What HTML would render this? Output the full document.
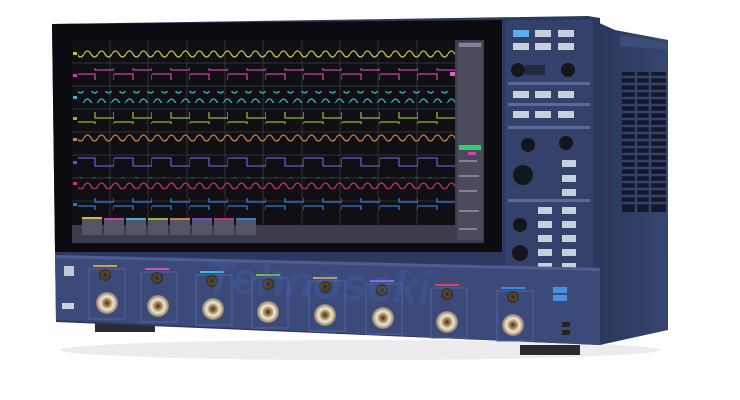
<!DOCTYPE html>
<html><head><meta charset="utf-8"><style>
html,body{margin:0;padding:0;background:#fff;}
svg{display:block;}
</style></head><body>
<svg width="740" height="400" viewBox="0 0 740 400" xmlns="http://www.w3.org/2000/svg" font-family="Liberation Sans, sans-serif">
<defs>
<linearGradient id="side" x1="0" x2="1"><stop offset="0" stop-color="#2a3658"/><stop offset="1" stop-color="#364570"/></linearGradient>
<radialGradient id="bnc"><stop offset="0" stop-color="#3a3020"/><stop offset="0.35" stop-color="#b09060"/><stop offset="0.6" stop-color="#f0e8d8"/><stop offset="1" stop-color="#8a7a60"/></radialGradient>
<radialGradient id="sm"><stop offset="0" stop-color="#202020"/><stop offset="0.5" stop-color="#5a4a30"/><stop offset="1" stop-color="#2a2a2a"/></radialGradient>
<pattern id="sy" width="14" height="12" patternUnits="userSpaceOnUse"><path d="M0 6 Q3.5 0 7 6 T14 6" fill="none" stroke="#c8c040" stroke-width="1.3"/></pattern>
<pattern id="sc" width="14" height="12" patternUnits="userSpaceOnUse"><path d="M0 6 Q3.5 0 7 6 T14 6" fill="none" stroke="#30b8c8" stroke-width="1.3"/></pattern>
<pattern id="so" width="14" height="12" patternUnits="userSpaceOnUse"><path d="M0 6 Q3.5 0 7 6 T14 6" fill="none" stroke="#c88040" stroke-width="1.3"/></pattern>
<pattern id="sp" width="14" height="12" patternUnits="userSpaceOnUse"><path d="M0 6 Q3.5 0 7 6 T14 6" fill="none" stroke="#c83070" stroke-width="1.3"/></pattern>
<pattern id="qm" width="38" height="12" patternUnits="userSpaceOnUse"><path d="M0 2 H19 V10 H38 V2" fill="none" stroke="#c840a8" stroke-width="1.3"/></pattern>
<pattern id="qg" width="38" height="12" patternUnits="userSpaceOnUse"><path d="M0 2 H19 V10 H38 V2" fill="none" stroke="#90b830" stroke-width="1.3"/></pattern>
<pattern id="qv" width="38" height="12" patternUnits="userSpaceOnUse"><path d="M0 2 H19 V10 H38 V2" fill="none" stroke="#7050c8" stroke-width="1.3"/></pattern>
<pattern id="qb" width="38" height="12" patternUnits="userSpaceOnUse"><path d="M0 2 H19 V10 H38 V2" fill="none" stroke="#3078d0" stroke-width="1.3"/></pattern>
</defs>
<ellipse cx="360" cy="350" rx="300" ry="10" fill="#ececee"/>
<rect x="95" y="322" width="60" height="10" fill="#2a2a30"/>
<rect x="520" y="345" width="60" height="10" fill="#2a2a30"/>
<path d="M588 18 L615 30 L668 40 L668 330 L600 345 Z" fill="url(#side)"/>
<path d="M620 35 L668 42 L668 50 L620 46 Z" fill="#3d4c78"/>
<rect x="622" y="72" width="44" height="140" fill="#14182a"/>
<g stroke="#34426a" stroke-width="2.5">
<line x1="622" y1="77" x2="666" y2="77"/><line x1="622" y1="84" x2="666" y2="84"/><line x1="622" y1="91" x2="666" y2="91"/><line x1="622" y1="98" x2="666" y2="98"/><line x1="622" y1="105" x2="666" y2="105"/><line x1="622" y1="112" x2="666" y2="112"/><line x1="622" y1="119" x2="666" y2="119"/><line x1="622" y1="126" x2="666" y2="126"/><line x1="622" y1="133" x2="666" y2="133"/><line x1="622" y1="140" x2="666" y2="140"/><line x1="622" y1="147" x2="666" y2="147"/><line x1="622" y1="154" x2="666" y2="154"/><line x1="622" y1="161" x2="666" y2="161"/><line x1="622" y1="168" x2="666" y2="168"/><line x1="622" y1="175" x2="666" y2="175"/><line x1="622" y1="182" x2="666" y2="182"/><line x1="622" y1="189" x2="666" y2="189"/><line x1="622" y1="196" x2="666" y2="196"/><line x1="622" y1="203" x2="666" y2="203"/>
<line x1="636" y1="72" x2="636" y2="212"/><line x1="650" y1="72" x2="650" y2="212"/>
</g>
<path d="M52 24 L588 16 L600 18 L600 345 L56 322 Z" fill="#2c3860"/>
<rect x="505" y="20" width="88" height="258" fill="#34416a"/>
<g fill="#c8d0dc">
<rect x="513" y="30" width="16" height="7" fill="#5ab0e8"/><rect x="535" y="30" width="16" height="7"/><rect x="558" y="30" width="16" height="7"/>
<rect x="513" y="43" width="16" height="7"/><rect x="535" y="43" width="16" height="7"/><rect x="558" y="43" width="16" height="7"/>
<rect x="513" y="91" width="16" height="7"/><rect x="535" y="91" width="16" height="7"/><rect x="558" y="91" width="16" height="7"/>
<rect x="513" y="111" width="16" height="7"/><rect x="535" y="111" width="16" height="7"/><rect x="558" y="111" width="16" height="7"/>
<rect x="562" y="160" width="14" height="7"/><rect x="562" y="175" width="14" height="7"/><rect x="562" y="189" width="14" height="7"/>
<rect x="538" y="207" width="14" height="7"/><rect x="562" y="207" width="14" height="7"/>
<rect x="538" y="221" width="14" height="7"/><rect x="562" y="221" width="14" height="7"/>
<rect x="538" y="235" width="14" height="7"/><rect x="562" y="235" width="14" height="7"/>
<rect x="538" y="249" width="14" height="7"/><rect x="562" y="249" width="14" height="7"/>
<rect x="538" y="263" width="14" height="7"/><rect x="562" y="263" width="14" height="7"/>
</g>
<g fill="#5a6a96"><rect x="508" y="82" width="82" height="3"/><rect x="508" y="103" width="82" height="3"/><rect x="508" y="126" width="82" height="3"/><rect x="508" y="199" width="82" height="3"/></g>
<g fill="#15161c">
<circle cx="518" cy="70" r="7"/><circle cx="568" cy="70" r="7"/>
<circle cx="528" cy="145" r="7"/><circle cx="566" cy="143" r="7"/>
<circle cx="523" cy="175" r="10"/>
<circle cx="520" cy="225" r="7"/><circle cx="520" cy="253" r="8"/>
</g>
<rect x="525" y="65" width="20" height="10" fill="#222a40"/>
<path d="M52 24 L502 20 L502 252 L55 252 Z" fill="#0c0c10"/>
<rect x="72" y="40" width="412" height="203" fill="#3c3c4c"/>
<rect x="72" y="40" width="383" height="185" fill="#101014"/>
<rect x="457" y="42" width="26" height="198" fill="#4a4a5c"/>
<rect x="459" y="145" width="22" height="5" fill="#30d070"/>
<rect x="468" y="152" width="8" height="3" fill="#d040c0"/>
<g fill="#9a9ab0" opacity="0.7"><rect x="459" y="43" width="22" height="4"/><rect x="459" y="160" width="18" height="2"/><rect x="459" y="175" width="20" height="2"/><rect x="459" y="190" width="18" height="2"/><rect x="459" y="210" width="20" height="2"/><rect x="459" y="228" width="18" height="2"/></g>
<g stroke="#3a3a44" stroke-width="0.8">
<line x1="110" y1="40" x2="110" y2="225"/><line x1="148" y1="40" x2="148" y2="225"/><line x1="187" y1="40" x2="187" y2="225"/><line x1="225" y1="40" x2="225" y2="225"/><line x1="263" y1="40" x2="263" y2="225"/><line x1="302" y1="40" x2="302" y2="225"/><line x1="340" y1="40" x2="340" y2="225"/><line x1="378" y1="40" x2="378" y2="225"/><line x1="417" y1="40" x2="417" y2="225"/>
<line x1="72" y1="63" x2="455" y2="63"/><line x1="72" y1="86" x2="455" y2="86"/><line x1="72" y1="109" x2="455" y2="109"/><line x1="72" y1="132" x2="455" y2="132"/><line x1="72" y1="155" x2="455" y2="155"/><line x1="72" y1="178" x2="455" y2="178"/><line x1="72" y1="201" x2="455" y2="201"/>
</g>
<rect x="78" y="47" width="377" height="12" fill="url(#sy)"/>
<rect x="78" y="68" width="377" height="12" fill="url(#qm)"/>
<rect x="78" y="91" width="377" height="12" fill="url(#sc)"/>
<rect x="78" y="112" width="377" height="12" fill="url(#qg)"/>
<rect x="78" y="133" width="377" height="12" fill="url(#so)"/>
<rect x="78" y="156" width="377" height="12" fill="url(#qv)"/>
<rect x="78" y="177" width="377" height="12" fill="url(#sp)"/>
<rect x="78" y="198" width="377" height="12" fill="url(#qb)"/>
<g>
<rect x="73" y="52" width="4" height="3" fill="#c8c040"/><rect x="73" y="74" width="4" height="3" fill="#c840a8"/><rect x="73" y="96" width="4" height="3" fill="#30b8c8"/><rect x="73" y="117" width="4" height="3" fill="#90b830"/><rect x="73" y="138" width="4" height="3" fill="#c88040"/><rect x="73" y="161" width="4" height="3" fill="#7050c8"/><rect x="73" y="182" width="4" height="3" fill="#c83070"/><rect x="73" y="203" width="4" height="3" fill="#3078d0"/>
<rect x="450" y="72" width="5" height="4" fill="#e060d0"/>
</g>
<g>
<rect x="82" y="217" width="20" height="18" fill="#55556a"/><rect x="82" y="217" width="20" height="2" fill="#c8c040"/>
<rect x="104" y="218" width="20" height="17" fill="#55556a"/><rect x="104" y="218" width="20" height="2" fill="#c840a8"/>
<rect x="126" y="218" width="20" height="17" fill="#55556a"/><rect x="126" y="218" width="20" height="2" fill="#30b8c8"/>
<rect x="148" y="218" width="20" height="17" fill="#55556a"/><rect x="148" y="218" width="20" height="2" fill="#90b830"/>
<rect x="170" y="218" width="20" height="17" fill="#55556a"/><rect x="170" y="218" width="20" height="2" fill="#c88040"/>
<rect x="192" y="218" width="20" height="17" fill="#55556a"/><rect x="192" y="218" width="20" height="2" fill="#7050c8"/>
<rect x="214" y="218" width="20" height="17" fill="#55556a"/><rect x="214" y="218" width="20" height="2" fill="#c83070"/>
<rect x="236" y="218" width="20" height="17" fill="#55556a"/><rect x="236" y="218" width="20" height="2" fill="#3078d0"/>
</g>
<path d="M55 255 L600 268 L600 345 L56 320 Z" fill="#3c4a7a"/>
<path d="M55 255 L600 268 L600 271 L55 258 Z" fill="#4f5e90"/>
<rect x="64" y="266" width="10" height="10" fill="#c0c8d8"/>
<rect x="62" y="303" width="12" height="6" fill="#c8d0e0"/>
<g>
<g transform="translate(105,275)"><rect x="-16" y="-6" width="36" height="50" fill="none" stroke="#5262a0"/><rect x="-12" y="-10" width="24" height="2" fill="#d0a040"/><circle r="6" fill="url(#sm)"/><circle cx="2" cy="28" r="11" fill="url(#bnc)"/></g>
<g transform="translate(157,278)"><rect x="-16" y="-6" width="36" height="50" fill="none" stroke="#5262a0"/><rect x="-12" y="-10" width="24" height="2" fill="#d050b0"/><circle r="6" fill="url(#sm)"/><circle cx="1" cy="28" r="11" fill="url(#bnc)"/></g>
<g transform="translate(212,281)"><rect x="-16" y="-6" width="36" height="50" fill="none" stroke="#5262a0"/><rect x="-12" y="-10" width="24" height="2" fill="#40b8d8"/><circle r="6" fill="url(#sm)"/><circle cx="1" cy="28" r="11" fill="url(#bnc)"/></g>
<g transform="translate(268,284)"><rect x="-16" y="-6" width="36" height="50" fill="none" stroke="#5262a0"/><rect x="-12" y="-10" width="24" height="2" fill="#80c040"/><circle r="6" fill="url(#sm)"/><circle cx="0" cy="28" r="11" fill="url(#bnc)"/></g>
<g transform="translate(325,287)"><rect x="-16" y="-6" width="36" height="50" fill="none" stroke="#5262a0"/><rect x="-12" y="-10" width="24" height="2" fill="#e0a040"/><circle r="6" fill="url(#sm)"/><circle cx="0" cy="28" r="11" fill="url(#bnc)"/></g>
<g transform="translate(382,290)"><rect x="-16" y="-6" width="36" height="50" fill="none" stroke="#5262a0"/><rect x="-12" y="-10" width="24" height="2" fill="#9070d8"/><circle r="6" fill="url(#sm)"/><circle cx="1" cy="28" r="11" fill="url(#bnc)"/></g>
<g transform="translate(447,294)"><rect x="-16" y="-6" width="36" height="50" fill="none" stroke="#5262a0"/><rect x="-12" y="-10" width="24" height="2" fill="#e04060"/><circle r="6" fill="url(#sm)"/><circle cx="0" cy="28" r="11" fill="url(#bnc)"/></g>
<g transform="translate(513,297)"><rect x="-16" y="-6" width="36" height="50" fill="none" stroke="#5262a0"/><rect x="-12" y="-10" width="24" height="2" fill="#3090e0"/><circle r="6" fill="url(#sm)"/><circle cx="0" cy="28" r="11" fill="url(#bnc)"/></g>
</g>
<rect x="553" y="287" width="14" height="6" fill="#4a90e0"/><rect x="553" y="295" width="14" height="6" fill="#4a90e0"/>
<rect x="562" y="322" width="8" height="5" fill="#222"/><rect x="562" y="330" width="8" height="5" fill="#222"/>
<text x="205" y="300" font-size="46" font-style="italic" font-weight="bold" fill="#3a70c8" opacity="0.22" transform="rotate(3 350 290)">Tehnoseki</text>
</svg>
</body></html>
